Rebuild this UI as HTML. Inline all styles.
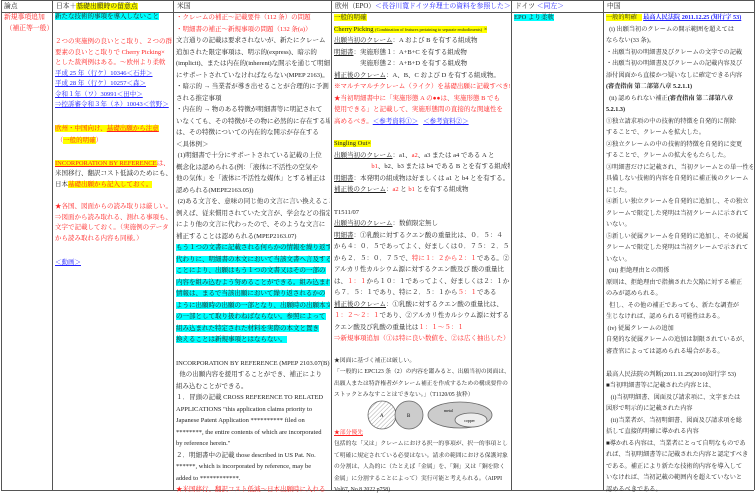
<!DOCTYPE html>
<html><head><meta charset="utf-8"><style>
*{margin:0;padding:0;box-sizing:border-box}
body{width:756px;height:496px;background:#fff;position:relative;overflow:hidden;font-family:"Liberation Serif","Noto Serif CJK SC",serif;font-size:6.5px;color:#222}
.vl{position:absolute;top:0;height:490px;width:1px;background:#555}
.hl{position:absolute;left:1px;width:753px;height:1px;background:#555}
.col{position:absolute;top:12px;line-height:11.5px;white-space:nowrap;overflow:hidden}
.hd{position:absolute;top:1px;line-height:11px;white-space:nowrap;overflow:hidden;font-size:6.8px}
.r{color:#f22}.b{color:#22f;text-decoration:underline}.c{background:#0ff}.y{background:#ff0}
.u{text-decoration:underline}.bd{font-weight:bold}
div.l{height:11.5px}
</style></head><body>
<div class="vl" style="left:1px"></div><div class="vl" style="left:52px"></div><div class="vl" style="left:173px"></div><div class="vl" style="left:331px"></div><div class="vl" style="left:511px"></div><div class="vl" style="left:603px"></div><div class="vl" style="left:754px"></div>
<div class="hl" style="top:0"></div><div class="hl" style="top:12px"></div><div class="hl" style="top:490px"></div>

<div class="hd" style="left:4px">論点</div>
<div class="hd" style="left:56px">日本＋<span class="y">基礎出願時の留意点</span></div>
<div class="hd" style="left:177px">米国</div>
<div class="hd" style="left:335px">欧州（EPO）<span style="color:#22f">＜長谷川寛ドイツ弁理士の資料を参照した＞</span></div>
<div class="hd" style="left:515px">ドイツ <span style="color:#22f">＜同左＞</span></div>
<div class="hd" style="left:607px">中国</div>

<div class="col r" style="left:4px;width:47px;line-height:11px;font-size:6.8px"><div>新規事項追加</div><div>&nbsp;（補正等一般）</div></div>

<div class="col" style="left:55px;width:117px;line-height:10.5px">
<div class="l" style="height:11px"><span class="c">新たな技術的事項を導入しないこと</span></div>
<div style="height:14px"></div>
<div class="r">２つの実施例の良いとこ取り、２つの群の</div>
<div class="r">要素の良いとこ取りで Cherry Picking×</div>
<div class="r">とした裁判例はある。～欧州より柔軟</div>
<div class="b">平成 25 年（行ケ）10346＜石井＞</div>
<div class="b">平成 28 年（行ケ）10257＜森＞</div>
<div class="b">令和１年（ワ）30991＜田中＞</div>
<div class="b">⇒控訴審令和３年（ネ）10043＜菅野＞</div>
<div style="height:13px"></div>
<div class="r"><span class="y">欧州・中国向け、<span class="u">基礎出願から注意</span></span></div>
<div class="r" style="margin-top:2px">&nbsp;（<span class="y">一般的明確</span>）</div>
<div style="height:12px"></div>
<div class="r"><span class="y u">INCORPORATION BY REFERENCE</span>は、</div>
<div>米国移行、翻訳コスト低減のためにも、</div>
<div>日本<span class="y r">基礎出願から記入しておく。</span></div>
<div style="height:12px"></div>
<div class="r">★各国、図面からの読み取りは厳しい。</div>
<div class="r">⇒図面から読み取れる、測れる事項も、</div>
<div class="r">文字で記載しておく。（実施例のデータ</div>
<div class="r">から読み取れる内容も同様。）</div>
<div style="height:14px"></div>
<div class="b">＜動画＞</div>
</div>

<div class="col" style="left:176px;width:154px">
<div class="r">・クレームの補正～記載要件（112 条）の問題</div>
<div class="r">・明細書の補正～新規事項の問題（132 条(a)）</div>
<div>文言通りの記載は要求されないが、新たにクレーム</div>
<div>追加された限定事項は、明示的(express)、暗示的</div>
<div>(implicit)、または内在的(inherent)な開示を通じて明細書</div>
<div>にサポートされていなければならない(MPEP 2163)。</div>
<div>・暗示的 → 当業者が導き出せることが合理的に予測</div>
<div>される推定事項</div>
<div>・内在的 → 物のある特徴が明細書等に明記されて</div>
<div>いなくても、その特徴がその物に必然的に存在する場合</div>
<div>は、その特徴についての内在的な開示が存在する</div>
<div>＜具体例＞</div>
<div>&nbsp;(1)明細書で十分にサポートされている記載の上位</div>
<div>概念化は認められる(例：「液体に不活性の空気や</div>
<div>他の気体」を「液体に不活性な媒体」とする補正は</div>
<div>認められる(MEPE2163.05))</div>
<div>&nbsp;(2)ある文言を、意味の同じ他の文言に言い換えること。</div>
<div>例えば、従来慣用されていた文言が、学会などの指定</div>
<div>により他の文言に代わったので、そのような文言に</div>
<div>補正することは認められる(MPEP2163.07)</div>
<div><span class="c">もう１つの文書に記載される何らかの情報を繰り返す</span></div>
<div><span class="c">代わりに、明細書の本文において当該文書へ言及する</span></div>
<div><span class="c">ことにより、出願はもう１つの文書又はその一部の</span></div>
<div><span class="c">内容を組み込むよう努めることができる。組み込まれる</span></div>
<div><span class="c">情報は、まるで当該出願において繰り返されるかの</span></div>
<div><span class="c">ように出願時の出願の一部となり、出願時の出願本文</span></div>
<div><span class="c">の一部として取り扱わねばならない。参照によって</span></div>
<div><span class="c">組み込まれた特定された材料を実際の本文と置き</span></div>
<div><span class="c">換えることは新規事項とはならない。</span></div>
<div style="height:12px"></div>
<div>INCORPORATION BY REFERENCE (MPEP 2103.07(B))</div>
<div>&nbsp;&nbsp;他の出願内容を援用することができ、補正により</div>
<div>組み込むことができる。</div>
<div>１．冒頭の記載 CROSS REFERENCE TO RELATED</div>
<div>APPLICATIONS "this application claims priority to</div>
<div>Japanese Patent Application ********** filed on</div>
<div>********, the entire contents of which are incorporated</div>
<div>by reference herein."</div>
<div>２．明細書中の記載 those described in US Pat. No.</div>
<div>******, which is incorporated by reference, may be</div>
<div>added to ************.</div>
<div class="r">★米国移行、翻訳コスト低減～日本出願時に入れる</div>
</div>

<div class="col" style="left:334px;width:176px">
<div><span class="y">一般的明確</span></div>
<div><span class="y">Cherry Picking <span style="font-size:4.3px">(Combination of features pertaining to separate embodiments)</span> ×</span></div>
<div><span class="u">出願当初のクレーム</span>：A および B を有する組成物</div>
<div><span class="u">明細書</span>：実施形態１：A+B+C を有する組成物</div>
<div>&nbsp;&nbsp;&nbsp;&nbsp;&nbsp;&nbsp;&nbsp;&nbsp;&nbsp;&nbsp;&nbsp;&nbsp;&nbsp;&nbsp;&nbsp;&nbsp;実施形態２：A+B+D を有する組成物</div>
<div><span class="u">補正後のクレーム</span>：A、B、C および D を有する組成物。</div>
<div class="r">※マルチマルチクレーム（ライク）を基礎出願に記載すべき!!</div>
<div class="r">★当初明細書中に「実施形態 A の●●は、実施形態 B でも</div>
<div class="r">使用できる」と記載して、実施形態間の直接的な関連性を</div>
<div class="r">高めるべき。<span class="b">＜参考資料①＞</span>&nbsp;&nbsp;&nbsp;<span class="b">＜参考資料②＞</span></div>
<div style="height:11px"></div>
<div><span class="y">Singling Out×</span></div>
<div><span class="u">出願当初のクレーム</span>：a1、<span class="r">a2</span>、a3 または a4 である A と</div>
<div>&nbsp;&nbsp;&nbsp;&nbsp;&nbsp;&nbsp;&nbsp;&nbsp;&nbsp;&nbsp;&nbsp;&nbsp;&nbsp;&nbsp;&nbsp;&nbsp;&nbsp;&nbsp;&nbsp;&nbsp;&nbsp;&nbsp;&nbsp;<span class="r">b1</span>、b2、b3 または b4 である B とを有する組成物</div>
<div><span class="u">明細書</span>：本発明の組成物は好ましくは a1 と b4 とを有する。</div>
<div><span class="u">補正後のクレーム</span>：<span class="r">a2</span> と <span class="r">b1</span> とを有する組成物</div>
<div style="height:11px"></div>
<div>T1511/07</div>
<div><span class="u">出願当初のクレーム</span>：数値限定無し</div>
<div><span class="u">明細書</span>：①乳酸に対するクエン酸の重量比は、０．５：４</div>
<div>から４：０．５であってよく、好ましくは０．７５：２．５</div>
<div>から２．５：０．７５で、<span class="r">特に１：２から２：１</span>である。②</div>
<div>アルカリ性カルシウム源に対するクエン酸及び 酸の重量比</div>
<div>は、<span class="r">１：１</span>から１０：１であってよく、好ましくは２：１か</div>
<div>ら７．５：１であり、特に２．５：１から<span class="r">５：１</span>である</div>
<div><span class="u">補正後のクレーム</span>：①乳酸に対するクエン酸の重量比は、</div>
<div><span class="r">１：２～２：１</span>であり、②アルカリ性カルシウム源に対する</div>
<div>クエン酸及び乳酸の重量比は<span class="r">１：１～５：１</span></div>
<div class="r">⇒新規事項追加（①は特に良い数値を、②は広く抽出した）</div>
<div style="height:11px"></div>
<div style="font-size:5.8px">★図面に基づく補正は厳しい。</div>
<div style="font-size:5.8px">「一般的に EPC123 条（2）の内容を鑑みると、出願当初の図面は、</div>
<div style="font-size:5.8px">出願人または特許権者がクレーム補正を作成するための構成要件の</div>
<div style="font-size:5.8px">ストックとみなすことはできない。」（T1120/05 抜粋）</div>
<div style="height:26px;position:relative">
<svg width="176" height="34" style="position:absolute;left:0;top:-4px">
<defs><pattern id="h" width="3" height="3" patternUnits="userSpaceOnUse" patternTransform="rotate(45)"><line x1="0" y1="0" x2="0" y2="3" stroke="#999" stroke-width="0.8"/></pattern></defs>
<circle cx="48" cy="17" r="14" fill="url(#h)" stroke="#666" stroke-width="0.8"/>
<text x="46" y="19" font-size="5">A</text>
<circle cx="75" cy="17" r="14" fill="#ccc" stroke="#666" stroke-width="0.8"/>
<text x="73" y="19" font-size="5">B</text>
<ellipse cx="126" cy="17" rx="32" ry="13" fill="#ccc" stroke="#666" stroke-width="0.8"/>
<ellipse cx="137" cy="22" rx="16" ry="7" fill="#eee" stroke="#666" stroke-width="0.8"/>
<text x="110" y="14" font-size="4">metal</text><text x="130" y="24" font-size="4">copper</text>
</svg></div>
<div class="r u" style="font-size:5.8px">★部分優先</div>
<div style="font-size:5.8px">包括的な「又は」クレームにおける択一的事項が、択一的事項とし</div>
<div style="font-size:5.8px">て明確に規定されている必要はない。請求の範囲における保護対象</div>
<div style="font-size:5.8px">の分割は、人為的に（たとえば「金属」を、「銅」又は「銅を除く</div>
<div style="font-size:5.8px">金属」に分割することによって）実行可能と考えられる。（AIPPI</div>
<div style="font-size:5.8px">Vol67, No.8 2022 p758)</div>
</div>

<div class="col" style="left:514px;width:88px"><div><span class="c">EPO より柔軟</span></div></div>

<div class="col" style="left:606px;width:147px;font-size:6.2px">
<div><span class="y">一般的明確&nbsp;&nbsp;&nbsp;</span> <span class="b bd">最高人民法院 2011.12.25 (知行字 53)</span></div>
<div>&nbsp;&nbsp;(i) 出願当初のクレームの開示範囲を超えては</div>
<div>ならない(33 条)。</div>
<div>・出願当初の明細書及びクレームの文字での記載</div>
<div>・出願当初の明細書及びクレームの記載内容及び</div>
<div>添付図面から直接かつ疑いなしに確定できる内容</div>
<div class="bd">(審査指南 第二部第八章 5.2.1.1)</div>
<div>&nbsp;&nbsp;(ii) 認められない補正<b>(審査指南 第二部第八章</b></div>
<div class="bd">5.2.1.3)</div>
<div>①独立請求項の中の技術的特徴を自発的に削除</div>
<div>することで、クレームを拡大した。</div>
<div>②独立クレームの中の技術的特徴を自発的に変更</div>
<div>することで、クレームの拡大をもたらした。</div>
<div>③明細書だけに記載され、当初クレームとの単一性を</div>
<div>具備しない技術的内容を自発的に補正後のクレーム</div>
<div>にした。</div>
<div>④新しい独立クレームを自発的に追加し、その独立</div>
<div>クレームで限定した発明は当初クレームに示されて</div>
<div>いない。</div>
<div>⑤新しい従属クレームを自発的に追加し、その従属</div>
<div>クレームで限定した発明は当初クレームで示されて</div>
<div>いない。</div>
<div>&nbsp;&nbsp;(iii) 拒絶理由との関係</div>
<div>原則は、拒絶理由で指摘された欠陥に対する補正</div>
<div>のみが認められる。</div>
<div>&nbsp;&nbsp;但し、その他の補正であっても、新たな調査が</div>
<div>生じなければ、認められる可能性はある。</div>
<div>&nbsp;(iv) 従属クレームの追加</div>
<div>自発的な従属クレームの追加は制限されているが、</div>
<div>審査官によっては認められる場合がある。</div>
<div style="height:11.5px"></div>
<div>最高人民法院の判断(2011.11.25(2010)知行字 53)</div>
<div>■当初明細書等に記載された内容とは、</div>
<div>&nbsp;&nbsp;&nbsp;(i)当初明細書、図面及び請求項に、文字または</div>
<div>図形で明示的に記載された内容</div>
<div>&nbsp;&nbsp;&nbsp;(ii)当業者が、当初明細書、図面及び請求項を総</div>
<div>括して直接的明確に導かれる内容</div>
<div>■導かれる内容は、当業者にとって自明なものであ</div>
<div>れば、当初明細書等に記載された内容と認定すべき</div>
<div>である。補正により新たな技術的内容を導入して</div>
<div>いなければ、当初記載の範囲内を超えていないと</div>
<div>認めるべきである。</div>
</div>
</body></html>
